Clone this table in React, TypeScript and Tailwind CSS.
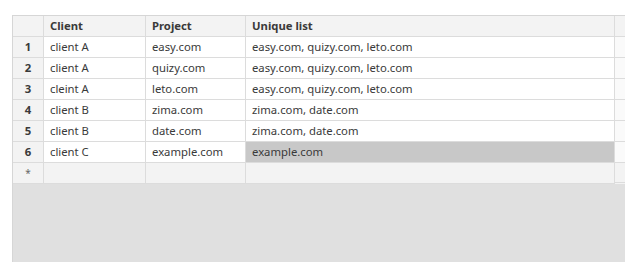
const rows = [
  ['client A', 'easy.com', 'easy.com, quizy.com, leto.com'],
  ['client A', 'quizy.com', 'easy.com, quizy.com, leto.com'],
  ['cleint A', 'leto.com', 'easy.com, quizy.com, leto.com'],
  ['client B', 'zima.com', 'zima.com, date.com'],
  ['client B', 'date.com', 'zima.com, date.com'],
  ['client C', 'example.com', 'example.com'],
]

const cell = 'flex h-[21px] items-center border-b border-r border-[#dcdcdc] px-[6px] truncate'

export default function App() {
  return (
    <div
      className="h-[262px] w-[625px] overflow-hidden bg-white pl-[12px] pt-[15px] text-[11.3px] text-[#3a3a3a]"
      style={{ fontFamily: '"Noto Sans", "Open Sans", sans-serif' }}
    >
      <div className="flex h-[247px] flex-col border-l border-t border-[#d6d6d6] bg-[#e0e0e0]">
        <div className="grid grid-cols-[31px_102px_100px_369px_1fr] bg-[#f3f3f3]">
          <div className={cell} />
          <div className={`${cell} font-bold`}>Client</div>
          <div className={`${cell} font-bold`}>Project</div>
          <div className={`${cell} font-bold`}>Unique list</div>
          <div className="h-[21px] border-b border-[#dcdcdc]" />
          {rows.map((r, i) => (
            <div key={i} className="contents">
              <div className={`${cell} justify-center bg-[#f3f3f3] px-0 font-bold`}>{i + 1}</div>
              <div className={`${cell} bg-white`}>{r[0]}</div>
              <div className={`${cell} bg-white`}>{r[1]}</div>
              <div className={`${cell} ${i === 5 ? 'bg-[#c8c8c8]' : 'bg-white'}`}>{r[2]}</div>
              <div className="h-[21px] border-b border-[#dcdcdc] bg-[#fafafa]" />
            </div>
          ))}
          <div className={`${cell} h-[20px] justify-center px-0 text-[10px] text-[#666]`}>*</div>
          <div className={`${cell} h-[20px]`} />
          <div className={`${cell} h-[20px]`} />
          <div className={`${cell} h-[20px]`} />
          <div className="h-[20px] border-b border-[#dcdcdc]" />
        </div>
      </div>
    </div>
  )
}
